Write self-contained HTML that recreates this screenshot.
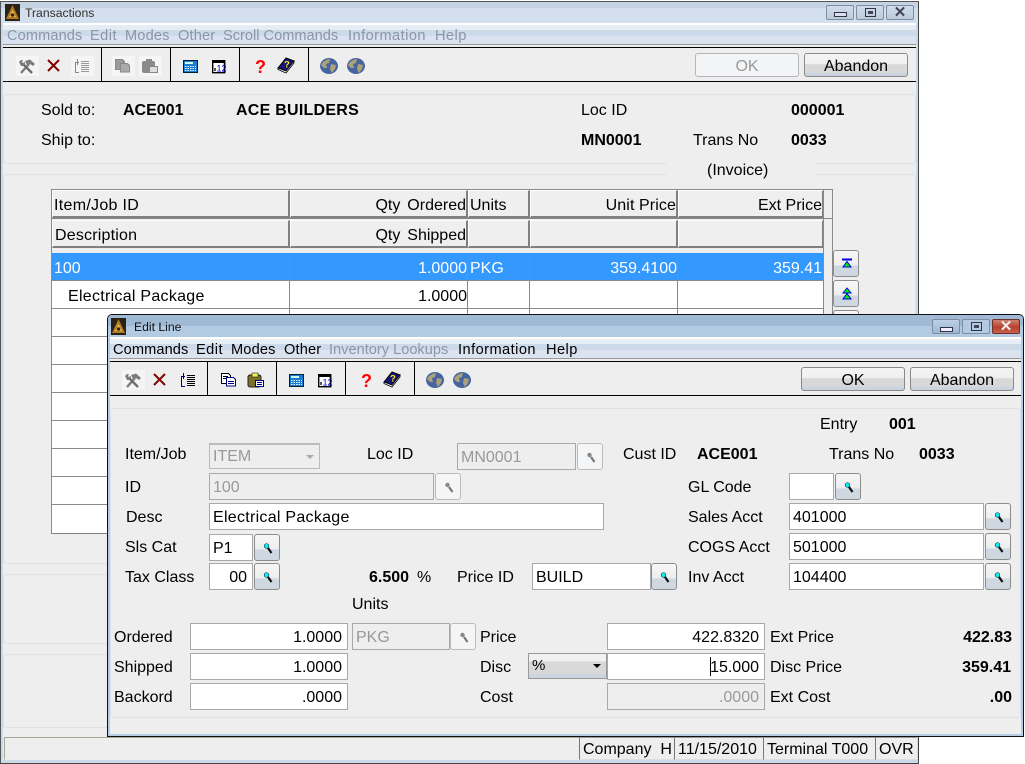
<!DOCTYPE html>
<html><head><meta charset="utf-8"><title>Transactions</title>
<style>
html,body{margin:0;padding:0;background:#fff}
#r{position:relative;width:1025px;height:764px;overflow:hidden;font:16px/20px "Liberation Sans",Arial,sans-serif;color:#000}
#r div,#r svg{position:absolute}
.t{white-space:nowrap;height:20px;line-height:24px}
.b{font-weight:bold}
.ra{text-align:right}
.g{color:#8f8f8f}
.m{font-size:14.6px;color:#000;line-height:22px}
.m2{font-size:14.6px;color:#8a95a5;line-height:22px}
.ti{line-height:20px;font-size:12.2px}
.ls{letter-spacing:.45px}
.f{box-sizing:border-box;background:#fff;border:1px solid #a8a8a8;height:27px;line-height:27px;padding:0 3px;white-space:nowrap}
.f.ra{padding-right:5px}
.d{background:#eee;color:#999}
.k{box-sizing:border-box;width:26px;height:27px;border:1px solid #8c8c8c;border-radius:3px;background:linear-gradient(#f6f6f6 0,#eee 55%,#cfd8e0 60%,#cfd8e0 100%)}
.kd{border-color:#bbb;background:#f4f5f6}
.btn{box-sizing:border-box;border:1px solid #8a8a8a;border-radius:3px;height:24px;text-align:center;line-height:26px;background:linear-gradient(#f4f4f4 0,#f0f0f0 45%,#d8d8d8 48%,#d8d8d8 85%,#c9d4e0 86%)}
.h{box-sizing:border-box;background:#efefef;border-top:1px solid #fff;border-left:1px solid #fff;border-right:2px solid #808080;border-bottom:2px solid #808080;height:28px;line-height:29px;padding:0 0 0 1px;white-space:nowrap}
.wb{box-sizing:border-box;width:28px;height:15px;border:1px solid #7f8da0;border-radius:2px;background:linear-gradient(#d0dcea,#bccbdd)}
.p{box-sizing:border-box;border:1px solid #dde2e8;border-radius:3px;background:#eee}
.line{background:#000;height:1px}
.gl{background:#8a8a8a}
.st{box-sizing:border-box;height:23px;border-left:1px solid #777;border-top:1px solid #999;background:#eee;border-bottom:1px solid #ddd;line-height:24px;padding-left:3px;white-space:nowrap}
</style></head><body><div id="r">
<svg width="0" height="0" style="left:0;top:0"><defs>
<g id="key"><circle cx="11.500" cy="11" r="2.3" fill="#1ee" stroke="#045" stroke-width=".7"/><path d="M13 13L16.500 18" stroke="#111" stroke-width="2.2"/></g>
<g id="keyd"><circle cx="11.500" cy="11" r="2.2" fill="#888"/><path d="M13 13L16.500 18" stroke="#777" stroke-width="2.2"/></g>
<g id="logo"><rect width="15" height="17" fill="#2a2218"/><path d="M7.500 1L14 15H1Z" fill="#b07c20"/><path d="M7.500 6L11 13H4Z" fill="#e8c060"/><circle cx="7.500" cy="11" r="1.8" fill="#402010"/></g>
<g id="globe"><ellipse cx="9" cy="8" rx="9" ry="8" fill="#46659f"/><path d="M3 4Q7 1 10 1L9 5 6 6 7 10 4 10 1 7ZM11 6L16 7 15 11 12 15 10 11Z" fill="#aca17c"/></g>
<g id="calc"><rect x=".5" y=".5" width="14" height="12" fill="#1c7ad0" stroke="#023"/><rect x="2" y="2" width="8" height="2" fill="#cfe"/><path d="M2 6.500h11M2 8.500h11M2 10.500h11" stroke="#dff" stroke-dasharray="1.500 1"/></g>
<g id="cal"><rect x=".7" y=".7" width="12" height="12" fill="#fff" stroke="#000" stroke-width="1.4"/><rect x="0" y="0" width="13" height="3" fill="#000"/><path d="M12.500 1v12" stroke="#000" stroke-width="1.6"/><rect x="2" y="8" width="2" height="3" fill="#555"/><text x="4.500" y="11.500" font-size="9" fill="#0000e0" font-family="Liberation Sans">12</text></g>
<g id="book"><path d="M0 10L8 0 16 3 8 13Z" fill="#14147c" stroke="#000"/><path d="M0 10V11.500L8 15 16 5V3L8 13Z" fill="#fff" stroke="#000" stroke-width=".8"/><text x="6" y="9.500" font-size="9.500" font-weight="bold" fill="#fe0" font-family="Liberation Sans">?</text></g>
<g id="tools" fill="#7c7c7c" stroke="none"><path d="M3 14L11 5" stroke="#7c7c7c" stroke-width="2.400"/><path d="M7 2L12 .5 17 5 15 7 12 5 9 6Z"/><path d="M5 5L14 14" stroke="#6c6c6c" stroke-width="2.400"/><path d="M1 3L3 1 5 1 4 3 5 4 7 3 7 5 5 7 3 7Z"/></g>
<g id="lines"><path d="M81 61.500h8M81 63.500h8M81 65.500h8M81 67.500h8M81 69.500h8M81 71.500h8" stroke-width="1"/></g>
</defs></svg>

<!-- Transactions window -->
<div style="left:0;top:1px;width:919px;height:763px;background:#ccd9e8;border-radius:5px 5px 0 0"></div>
<div style="left:0;top:1px;width:919px;height:1px;background:#555"></div>
<div style="left:0;top:1px;width:1px;height:763px;background:#555"></div>
<div style="left:918px;top:1px;width:1px;height:763px;background:#444"></div>
<div style="left:0;top:763px;width:919px;height:1px;background:#444"></div>
<div style="left:1px;top:2px;width:917px;height:8px;background:#c5d3e3"></div>
<div style="left:1px;top:8px;width:917px;height:15px;background:#d3dfed"></div>
<div style="left:3px;top:23px;width:913px;height:2px;background:#fff"></div>
<div style="left:3px;top:25px;width:913px;height:5px;background:#e6ecf4"></div>
<div style="left:3px;top:30px;width:913px;height:6px;background:#cddaea"></div>
<div style="left:3px;top:36px;width:913px;height:8px;background:#dce3f0"></div>
<div style="left:3px;top:44px;width:913px;height:1px;background:#999"></div>
<div style="left:3px;top:45px;width:913px;height:715px;background:#eee"></div>
<svg style="left:5px;top:4px" width="15" height="17"><use href="#logo"/></svg>
<div class="t ti" style="left:25px;top:3px;color:#333">Transactions</div>
<div class="wb" style="left:826px;top:5px"><div style="left:7px;top:6px;width:11px;height:3px;border:1px solid #334;background:#dde"></div></div>
<div class="wb" style="left:856px;top:5px"><div style="left:8px;top:2px;width:9px;height:7px;border:1px solid #334"></div><div style="left:11px;top:5px;width:5px;height:3px;background:#445"></div></div>
<div class="wb" style="left:886px;top:5px;font:bold 15px/13px 'Liberation Sans';color:#445;text-align:center">✕</div>
<div class="t m2" style="left:7px;top:25px;letter-spacing:.1px">Commands</div>
<div class="t m2 ls" style="left:90px;top:25px">Edit</div>
<div class="t m2" style="left:125px;top:25px;letter-spacing:.15px">Modes</div>
<div class="t m2" style="left:178px;top:25px;letter-spacing:.15px">Other</div>
<div class="t m2" style="left:223px;top:25px">Scroll Commands</div>
<div class="t m2 ls" style="left:348px;top:25px">Information</div>
<div class="t m2 ls" style="left:435px;top:25px">Help</div>
<div class="line" style="left:3px;top:47px;width:913px"></div>
<div class="line" style="left:3px;top:81px;width:913px"></div>
<div style="left:101px;top:47px;width:1px;height:34px;background:#000"></div>
<div style="left:170px;top:47px;width:1px;height:34px;background:#000"></div>
<div style="left:239px;top:47px;width:1px;height:34px;background:#000"></div>
<div style="left:308px;top:47px;width:1px;height:34px;background:#000"></div>
<div style="left:16px;top:56px;width:23px;height:20px;background:#f5f5f5"></div>
<div style="left:71px;top:56px;width:23px;height:20px;background:#f5f5f5"></div>
<div style="left:112px;top:56px;width:23px;height:20px;background:#f5f5f5"></div>
<div style="left:139px;top:56px;width:23px;height:20px;background:#f5f5f5"></div>
<svg style="left:0;top:0" width="400" height="90">
<use href="#tools" x="18" y="59"/>
<path d="M48 60L59 71M59 60L48 71" stroke="#800000" stroke-width="2"/>
<path d="M79 62.500H75.500V72.500H79M77.500 59V65" stroke="#888" fill="none"/><use href="#lines" stroke="#999"/>
<path d="M115.500 59.500h7l2 2v8h-9z" fill="#9a9a9a" stroke="#888"/><path d="M120.500 63.500h7l2 2v6.500h-9z" fill="#aaa" stroke="#888"/>
<rect x="142" y="61" width="13" height="12" rx="2" fill="#8a8a8a"/><rect x="146" y="59" width="6" height="4" fill="#8a8a8a"/><rect x="149.500" y="66.500" width="8" height="6" fill="#ddd" stroke="#888"/>
<use href="#calc" x="183" y="60"/>
<use href="#cal" x="212" y="60"/>
<text x="255" y="73" font-size="18" font-weight="bold" fill="#f00" font-family="Liberation Sans">?</text>
<use href="#book" x="278" y="58"/>
<use href="#globe" x="320" y="58"/>
<use href="#globe" x="347" y="58"/>
</svg>
<div class="btn" style="left:695px;top:53px;width:104px;border-color:#b2b6ba;background:#f3f4f6;color:#999">OK</div>
<div class="btn" style="left:804px;top:53px;width:104px">Abandon</div>

<div class="p" style="left:3px;top:94px;width:913px;height:70px"></div>
<div class="p" style="left:3px;top:174px;width:913px;height:390px"></div>
<div class="p" style="left:3px;top:574px;width:913px;height:70px"></div>
<div class="p" style="left:3px;top:654px;width:913px;height:74px"></div>
<div style="left:666px;top:160px;width:150px;height:20px;background:#eee"></div>
<div class="t" style="left:41px;top:99px">Sold to:</div>
<div class="t b" style="left:123px;top:99px">ACE001</div>
<div class="t b" style="left:236px;top:99px;letter-spacing:.25px">ACE BUILDERS</div>
<div class="t" style="left:581px;top:99px">Loc ID</div>
<div class="t b" style="left:791px;top:99px">000001</div>
<div class="t" style="left:41px;top:129px">Ship to:</div>
<div class="t b" style="left:581px;top:129px">MN0001</div>
<div class="t" style="left:693px;top:129px">Trans No</div>
<div class="t b" style="left:791px;top:129px">0033</div>
<div class="t" style="left:707px;top:159px">(Invoice)</div>

<!-- Grid -->
<div style="left:51px;top:189px;width:782px;height:345px;box-sizing:border-box;border:1px solid #8a8a8a;border-bottom:2px solid #808080;background:#eee"></div>
<div style="left:52px;top:253px;width:771px;height:280px;background:#fff"></div>
<div class="h" style="left:52px;top:190px;width:238px;letter-spacing:.3px">Item/Job ID</div>
<div class="h ra" style="left:290px;top:190px;width:178px;word-spacing:2.500px">Qty Ordered</div>
<div class="h" style="left:468px;top:190px;width:62px">Units</div>
<div class="h ra" style="left:530px;top:190px;width:148px;letter-spacing:.1px">Unit Price</div>
<div class="h ra" style="left:678px;top:190px;width:146px">Ext Price</div>
<div class="gl" style="left:52px;top:218px;width:780px;height:1px"></div>
<div class="h" style="left:52px;top:220px;width:238px;padding-left:2px;letter-spacing:.2px">Description</div>
<div class="h ra" style="left:290px;top:220px;width:178px;word-spacing:2.500px">Qty Shipped</div>
<div class="h" style="left:468px;top:220px;width:62px"></div>
<div class="h" style="left:530px;top:220px;width:148px"></div>
<div class="h" style="left:678px;top:220px;width:146px"></div>
<div style="left:823px;top:190px;width:1px;height:343px;background:#8a8a8a"></div>
<div style="left:52px;top:253px;width:771px;height:27px;background:#3399ff"></div>
<div class="gl" style="left:52px;top:280px;width:771px;height:1px"></div>
<div class="gl" style="left:52px;top:308px;width:771px;height:1px"></div>
<div class="gl" style="left:52px;top:336px;width:771px;height:1px"></div>
<div class="gl" style="left:52px;top:364px;width:771px;height:1px"></div>
<div class="gl" style="left:52px;top:392px;width:771px;height:1px"></div>
<div class="gl" style="left:52px;top:420px;width:771px;height:1px"></div>
<div class="gl" style="left:52px;top:448px;width:771px;height:1px"></div>
<div class="gl" style="left:52px;top:476px;width:771px;height:1px"></div>
<div class="gl" style="left:52px;top:504px;width:771px;height:1px"></div>
<div class="gl" style="left:289px;top:253px;width:1px;height:280px"></div>
<div class="gl" style="left:467px;top:253px;width:1px;height:280px"></div>
<div class="gl" style="left:529px;top:253px;width:1px;height:280px"></div>
<div class="gl" style="left:677px;top:253px;width:1px;height:280px"></div>
<div class="t" style="left:54px;top:257px;color:#fff">100</div>
<div class="t ra" style="left:300px;width:167px;top:257px;color:#fff">1.0000</div>
<div class="t" style="left:470px;top:257px;color:#fff">PKG</div>
<div class="t ra" style="left:530px;width:147px;top:257px;color:#fff">359.4100</div>
<div class="t ra" style="left:680px;width:142px;top:257px;color:#fff">359.41</div>
<div class="t" style="left:68px;top:285px;letter-spacing:.28px">Electrical Package</div>
<div class="t ra" style="left:300px;width:167px;top:285px">1.0000</div>
<div class="k" style="left:833px;top:250px"><svg width="24" height="25"><path d="M8 8.500h10" stroke="#00d" stroke-width="2"/><path d="M13 10.500L9 16H17Z" fill="#0e0" stroke="#00d"/></svg></div>
<div class="k" style="left:833px;top:280px"><svg width="24" height="25"><path d="M13 7L9 12H17Z M13 12.500L9 18H17Z" fill="#0e0" stroke="#00d"/></svg></div>
<div class="k" style="left:833px;top:310px"></div>

<!-- Status -->
<div style="left:4px;top:737px;width:575px;height:23px;box-sizing:border-box;border:1px solid #a8a898;border-right:none;border-bottom-color:#eee;background:#eee"></div>
<div class="st" style="left:579px;top:737px;width:95px">Company&nbsp; H</div>
<div class="st" style="left:674px;top:737px;width:89px">11/15/2010</div>
<div class="st" style="left:763px;top:737px;width:112px">Terminal T000</div>
<div class="st" style="left:875px;top:737px;width:42px">OVR</div>

<!-- Edit Line window -->
<div style="left:107px;top:314px;width:917px;height:423px;box-sizing:border-box;border:1px solid #111;border-radius:5px 5px 0 0;background:#b4cce4"></div>
<div style="left:108px;top:315px;width:915px;height:11px;background:#a0bad6;border-radius:4px 4px 0 0"></div>
<div style="left:108px;top:326px;width:915px;height:11px;background:#b2cbe3"></div>
<div style="left:110px;top:337px;width:911px;height:2px;background:#fff"></div>
<div style="left:110px;top:339px;width:911px;height:5px;background:#e8eef6"></div>
<div style="left:110px;top:344px;width:911px;height:6px;background:#cddaea"></div>
<div style="left:110px;top:350px;width:911px;height:8px;background:#dce3f0"></div>
<div style="left:110px;top:358px;width:911px;height:1px;background:#999"></div>
<div style="left:110px;top:359px;width:911px;height:375px;background:#eee"></div>
<svg style="left:111px;top:318px" width="15" height="17"><use href="#logo"/></svg>
<div class="t ti" style="left:134px;top:317px;color:#111">Edit Line</div>
<div class="wb" style="left:932px;top:319px;background:linear-gradient(#bcd0e6,#9db8d6)"><div style="left:7px;top:7px;width:11px;height:3px;border:1px solid #334;background:#eef"></div></div>
<div class="wb" style="left:962px;top:319px;background:#b4cae2"><div style="left:8px;top:2px;width:9px;height:7px;border:1px solid #334"></div><div style="left:11px;top:5px;width:5px;height:3px;background:#445"></div></div>
<div class="wb" style="left:992px;top:319px;background:linear-gradient(#d08070,#b84030 55%,#c86050);border-color:#703028;font:bold 15px/13px 'Liberation Sans';color:#eee;text-align:center">✕</div>
<div class="t m" style="left:113px;top:339px;letter-spacing:.1px">Commands</div>
<div class="t m ls" style="left:196px;top:339px">Edit</div>
<div class="t m" style="left:231px;top:339px;letter-spacing:.15px">Modes</div>
<div class="t m" style="left:284px;top:339px;letter-spacing:.15px">Other</div>
<div class="t m2" style="left:329px;top:339px">Inventory Lookups</div>
<div class="t m ls" style="left:458px;top:339px">Information</div>
<div class="t m ls" style="left:546px;top:339px">Help</div>
<div class="line" style="left:110px;top:361px;width:911px"></div>
<div class="line" style="left:110px;top:395px;width:911px"></div>
<div style="left:207px;top:361px;width:1px;height:34px;background:#000"></div>
<div style="left:276px;top:361px;width:1px;height:34px;background:#000"></div>
<div style="left:345px;top:361px;width:1px;height:34px;background:#000"></div>
<div style="left:414px;top:361px;width:1px;height:34px;background:#000"></div>
<div style="left:122px;top:370px;width:23px;height:20px;background:#f5f5f5"></div>
<svg style="left:106px;top:314px" width="400" height="90">
<use href="#tools" x="18" y="59"/>
<path d="M48 60L59 71M59 60L48 71" stroke="#800000" stroke-width="2"/>
<path d="M79 62.500H75.500V72.500H79M77.500 59V65" stroke="#000080" fill="none"/><use href="#lines" stroke="#000"/>
<path d="M115.500 59.500h7l2 2v8h-9zM117 62.500h5M117 64.500h5" fill="#fff" stroke="#000"/><path d="M120.500 63.500h7l2 2v6.500h-9zM122 67.500h6M122 69.500h6" fill="#fff" stroke="#000080"/>
<rect x="142" y="61" width="13" height="12" rx="2" fill="#7a7028" stroke="#222"/><rect x="146" y="59" width="6" height="4" fill="#ee5" stroke="#222" stroke-width=".6"/><path d="M149.500 66.500h8v6h-8zM151 68.500h5M151 70.500h5" fill="#fff" stroke="#000080"/>
<use href="#calc" x="183" y="60"/>
<use href="#cal" x="212" y="60"/>
<text x="255" y="73" font-size="18" font-weight="bold" fill="#f00" font-family="Liberation Sans">?</text>
<use href="#book" x="278" y="58"/>
<use href="#globe" x="320" y="58"/>
<use href="#globe" x="347" y="58"/>
</svg>
<div class="btn" style="left:801px;top:367px;width:104px">OK</div>
<div class="btn" style="left:910px;top:367px;width:104px">Abandon</div>
<div class="p" style="left:110px;top:408px;width:911px;height:310px"></div>

<div class="t" style="left:820px;top:413px">Entry</div>
<div class="t b" style="left:889px;top:413px">001</div>
<div class="t" style="left:125px;top:443px">Item/Job</div>
<div class="f d" style="left:209px;top:443px;width:111px;height:26px;border-color:#bbb;border-width:2px 1px 1px 1px;line-height:24px">ITEM</div>
<svg style="left:305px;top:454px" width="10" height="6"><path d="M1 1H9L5 5Z" fill="#aaa"/></svg>
<div class="t" style="left:367px;top:443px">Loc ID</div>
<div class="f d" style="left:457px;top:443px;width:119px">MN0001</div>
<div class="k kd" style="left:577px;top:443px"><svg width="24" height="25"><use href="#keyd"/></svg></div>
<div class="t" style="left:623px;top:443px">Cust ID</div>
<div class="t b" style="left:697px;top:443px">ACE001</div>
<div class="t" style="left:829px;top:443px">Trans No</div>
<div class="t b" style="left:919px;top:443px">0033</div>

<div class="t" style="left:125px;top:476px">ID</div>
<div class="f d" style="left:209px;top:473px;width:225px">100</div>
<div class="k kd" style="left:435px;top:473px"><svg width="24" height="25"><use href="#keyd"/></svg></div>
<div class="t" style="left:688px;top:476px">GL Code</div>
<div class="f" style="left:789px;top:473px;width:45px"></div>
<div class="k" style="left:835px;top:473px"><svg width="24" height="25"><use href="#key"/></svg></div>

<div class="t" style="left:126px;top:506px">Desc</div>
<div class="f" style="left:209px;top:503px;width:395px;letter-spacing:.28px">Electrical Package</div>
<div class="t" style="left:688px;top:506px">Sales Acct</div>
<div class="f" style="left:789px;top:503px;width:195px">401000</div>
<div class="k" style="left:985px;top:503px"><svg width="24" height="25"><use href="#key"/></svg></div>

<div class="t" style="left:125px;top:536px">Sls Cat</div>
<div class="f" style="left:209px;top:534px;width:44px">P1</div>
<div class="k" style="left:254px;top:534px"><svg width="24" height="25"><use href="#key"/></svg></div>
<div class="t" style="left:688px;top:536px">COGS Acct</div>
<div class="f" style="left:789px;top:533px;width:195px">501000</div>
<div class="k" style="left:985px;top:533px"><svg width="24" height="25"><use href="#key"/></svg></div>

<div class="t" style="left:125px;top:566px">Tax Class</div>
<div class="f ra" style="left:209px;top:563px;width:44px">00</div>
<div class="k" style="left:254px;top:563px"><svg width="24" height="25"><use href="#key"/></svg></div>
<div class="t b" style="left:369px;top:566px">6.500</div>
<div class="t" style="left:417px;top:566px">%</div>
<div class="t" style="left:457px;top:566px">Price ID</div>
<div class="f" style="left:532px;top:563px;width:119px">BUILD</div>
<div class="k" style="left:651px;top:563px"><svg width="24" height="25"><use href="#key"/></svg></div>
<div class="t" style="left:688px;top:566px">Inv Acct</div>
<div class="f" style="left:789px;top:563px;width:195px">104400</div>
<div class="k" style="left:985px;top:563px"><svg width="24" height="25"><use href="#key"/></svg></div>
<div class="t" style="left:352px;top:593px">Units</div>

<div class="t" style="left:114px;top:626px">Ordered</div>
<div class="f ra" style="left:190px;top:623px;width:158px">1.0000</div>
<div class="f d" style="left:352px;top:623px;width:98px">PKG</div>
<div class="k kd" style="left:450px;top:623px"><svg width="24" height="25"><use href="#keyd"/></svg></div>
<div class="t" style="left:480px;top:626px">Price</div>
<div class="f ra" style="left:607px;top:623px;width:158px">422.8320</div>
<div class="t" style="left:770px;top:626px">Ext Price</div>
<div class="t b ra" style="left:900px;width:112px;top:626px">422.83</div>

<div class="t" style="left:114px;top:656px">Shipped</div>
<div class="f ra" style="left:190px;top:653px;width:158px">1.0000</div>
<div class="t" style="left:480px;top:656px">Disc</div>
<div class="f" style="left:528px;top:653px;width:79px;height:26px;line-height:24px;border-color:#999;background:linear-gradient(#f0f0f0 0,#f0f0f0 30%,#d8d8d8 32%,#d8d8d8 85%,#c9d4e0 86%);font-size:15px;padding-left:3px">%</div>
<svg style="left:592px;top:663px" width="10" height="6"><path d="M1 1H9L5 5Z" fill="#000"/></svg>
<div class="f ra" style="left:607px;top:653px;width:158px">15.000</div>
<div style="left:710px;top:657px;width:1px;height:19px;background:#000"></div>
<div class="t" style="left:770px;top:656px">Disc Price</div>
<div class="t b ra" style="left:900px;width:111px;top:656px">359.41</div>

<div class="t" style="left:114px;top:686px">Backord</div>
<div class="f ra" style="left:190px;top:683px;width:158px">.0000</div>
<div class="t" style="left:480px;top:686px">Cost</div>
<div class="f d ra" style="left:607px;top:683px;width:158px">.0000</div>
<div class="t" style="left:770px;top:686px">Ext Cost</div>
<div class="t b ra" style="left:900px;width:112px;top:686px">.00</div>
</div></body></html>
